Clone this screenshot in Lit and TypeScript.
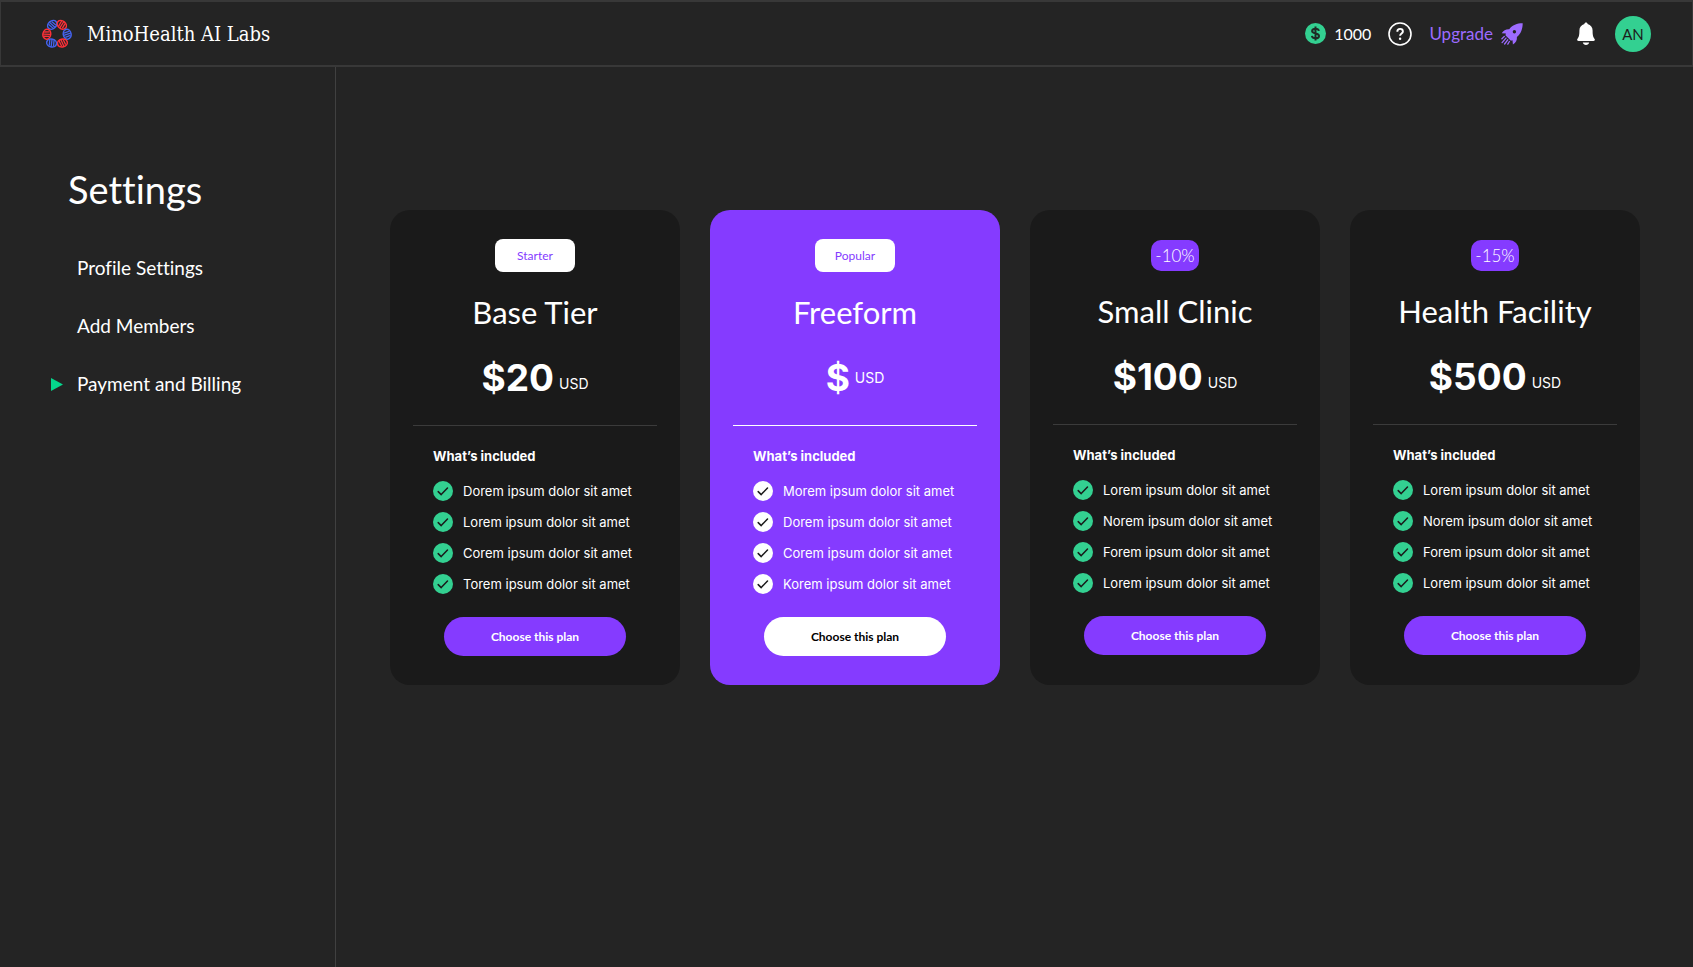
import { LitElement, html, css, svg } from "lit";
import { customElement, property } from "lit/decorators.js";
import { classMap } from "lit/directives/class-map.js";

interface Plan {
  name: string;
  tag: string;
  discount?: boolean;
  featured?: boolean;
  amount: string;
  items: string[];
}

const PLANS: Plan[] = [
  { name: "Base Tier", tag: "Starter", amount: "$20", items: ["Dorem", "Lorem", "Corem", "Torem"] },
  { name: "Freeform", tag: "Popular", featured: true, amount: "$", items: ["Morem", "Dorem", "Corem", "Korem"] },
  { name: "Small Clinic", tag: "-10%", discount: true, amount: "$100", items: ["Lorem", "Norem", "Forem", "Lorem"] },
  { name: "Health Facility", tag: "-15%", discount: true, amount: "$500", items: ["Lorem", "Norem", "Forem", "Lorem"] },
];

const BLUE = "#4463ee";
const RED = "#ff3038";

/* One twisted strand of the logo ring: centre, direction and colour. */
const STRANDS: [number, number, number, string][] = [
  [10.2, 5.8, -40, BLUE],
  [19.8, 5.8, 40, RED],
  [25.2, 15.2, 80, BLUE],
  [20.4, 24, -15, RED],
  [9.600, 24, 15, BLUE],
  [4.800, 15.200, -80, RED],
];

const strand = ([x, y, angle, color]: [number, number, number, string]) => svg`
  <g transform="translate(${x} ${y}) rotate(${angle})" stroke=${color} fill="none">
    <ellipse rx="5" ry="3.900" stroke-width="1.500" />
    <path d="M-2.600 -2.800l1 5.800M-.500 -3.600l1 7.200M1.700 -3l1 5.400" stroke-width="1.300" />
  </g>`;

@customElement("plan-card")
export class PlanCard extends LitElement {
  @property({ attribute: false }) plan!: Plan;

  static styles = css`
    :host { display: block; min-width: 0; }
    .card {
      box-sizing: border-box;
      height: 100%;
      padding: 29px 23px;
      border-radius: 20px;
      background: #1a1a1a;
      color: #fff;
      display: flex;
      flex-direction: column;
      align-items: center;
    }
    .featured { background: #853bff; }
    .tag {
      box-sizing: border-box;
      display: grid;
      place-items: center;
      width: 80px;
      height: 33px;
      border-radius: 8px;
      background: #fff;
      color: #853bff;
      font: 400 12px/16px Lato, sans-serif;
    }
    .discount {
      width: 48px;
      height: 31px;
      margin-top: 1px;
      border-radius: 10px;
      background: #853bff;
      color: #fff;
      font: 300 17px/20px Lato, sans-serif;
    }
    .name { margin: 22px 0 0; font: 400 31px/36px Lato, sans-serif; white-space: nowrap; }
    .price { margin: 24px 0 0; display: flex; align-items: flex-end; gap: 5px; height: 48px; }
    .featured .price { align-items: center; }
    .amount { font: 700 37px/48px Inter, sans-serif; }
    .currency { font: 400 14px/36px Inter, sans-serif; }
    .rule { width: 100%; height: 1px; margin: 23px 0 0; border: 0; background: #3b3b3b; }
    .featured .rule { background: #fff; }
    .included { align-self: stretch; padding: 0 20px; }
    .heading { margin: 20px 0 0; font: 700 13px/20px Inter, sans-serif; }
    .list { list-style: none; margin: 15px 0 0; padding: 0; display: grid; gap: 11px; }
    .item { display: flex; align-items: center; gap: 10px; font: 400 13px/20px Inter, sans-serif; white-space: nowrap; }
    .check { flex: none; width: 20px; height: 20px; color: #33d091; }
    .featured .check { color: #fff; }
    .choose {
      width: 182px;
      height: 39px;
      margin-top: 23px;
      padding: 0;
      border: 0;
      border-radius: 20px;
      background: #853bff;
      color: #fff;
      font: 700 12px/16px Lato, sans-serif;
      cursor: pointer;
    }
    .featured .choose { background: #fff; color: #000; }
  `;

  render() {
    const p = this.plan;
    return html`
      <article class=${classMap({ card: true, featured: !!p.featured })}>
        <span class=${classMap({ tag: true, discount: !!p.discount })}>${p.tag}</span>
        <h2 class="name">${p.name}</h2>
        <p class="price"><span class="amount">${p.amount}</span><span class="currency">USD</span></p>
        <hr class="rule" />
        <section class="included">
          <h3 class="heading">What’s included</h3>
          <ul class="list">
            ${p.items.map(
              (word) => html`<li class="item">
                <svg class="check" viewBox="0 0 20 20" aria-hidden="true">
                  <circle cx="10" cy="10" r="10" fill="currentColor" />
                  <path d="M5.2 10.6l3 3 6.3-6.6" fill="none" stroke="#1a1a1a" stroke-width="1.5" stroke-linecap="round" stroke-linejoin="round" />
                </svg>
                <span>${word} ipsum dolor sit amet</span>
              </li>`
            )}
          </ul>
        </section>
        <button class="choose" type="button">Choose this plan</button>
      </article>
    `;
  }
}

@customElement("app-root")
export class AppRoot extends LitElement {
  static styles = css`
    :host {
      display: flex;
      flex-direction: column;
      min-height: 100vh;
      background: #242424;
      color: #fff;
      font-family: Lato, sans-serif;
      font-variant-ligatures: none;
    }
    a { color: inherit; text-decoration: none; }
    .topbar {
      box-sizing: border-box;
      height: 67px;
      padding: 0 41px;
      border: 2px solid #383838;
      border-width: 2px 1px;
      display: flex;
      align-items: center;
      justify-content: space-between;
    }
    .brand { display: flex; align-items: center; gap: 15px; font: 400 20px/24px "DejaVu Serif Condensed", "DejaVu Serif", serif; }
    .logo { width: 30px; height: 30px; }
    .tools { display: flex; align-items: center; font-size: 17px; line-height: 24px; }
    .credits { display: flex; align-items: center; gap: 8px; font-size: 16px; }
    .coin { width: 21px; height: 21px; }
    .icon-button { display: flex; padding: 0; border: 0; background: none; color: #fff; cursor: pointer; }
    .help { margin: 0 17px; }
    .help svg { width: 24px; height: 24px; }
    .upgrade { display: flex; align-items: center; gap: 8px; color: #9d6bff; }
    .rocket { width: 22px; height: 22px; }
    .bell { margin: 0 20px 0 54px; }
    .bell svg { width: 18px; height: 24px; }
    .avatar {
      width: 36px;
      height: 36px;
      padding: 0;
      border: 0;
      border-radius: 50%;
      background: #33d091;
      color: #1c1c1c;
      font: 400 15px/20px Lato, sans-serif;
      cursor: pointer;
    }
    .body { flex: 1; display: grid; grid-template-columns: 336px minmax(0, 1fr); }
    .sidebar { box-sizing: border-box; padding: 100px 20px 0 51px; border-right: 1px solid #404040; }
    .title { margin: 0 0 0 17px; font: 400 38px/44px Lato, sans-serif; font-variant-ligatures: none; }
    .menu { list-style: none; margin: 45px 0 0; padding: 0; display: grid; gap: 34px; font-size: 19px; line-height: 24px; }
    .entry { display: flex; align-items: center; gap: 14px; }
    .marker { width: 12px; height: 13px; fill: #05d68c; }
    .plans {
      display: grid;
      grid-template-columns: repeat(4, minmax(0, 1fr));
      gap: 30px;
      align-content: start;
      padding: 143px 53px 60px 54px;
    }
  `;

  render() {
    const entries = ["Profile Settings", "Add Members", "Payment and Billing"];
    return html`
      <header class="topbar">
        <a class="brand" href="#">
          <svg class="logo" viewBox="0 0 30 30" aria-hidden="true">${STRANDS.map(strand)}</svg>
          <span>MinoHealth AI Labs</span>
        </a>
        <div class="tools">
          <span class="credits">
            <svg class="coin" viewBox="0 0 21 21" aria-hidden="true">
              <circle cx="10.5" cy="10.5" r="10.5" fill="#33d091" />
              <path d="M13.9 7.9c-.3-1.5-1.6-2.2-3.4-2.2-2 0-3.4.9-3.4 2.4 0 3.3 6.9 1.5 6.9 4.8 0 1.5-1.5 2.4-3.5 2.4S7.2 14.5 6.9 12.9M10.5 3.5v14" fill="none" stroke="#1f2b26" stroke-width="2" />
            </svg>
            <span>1000</span>
          </span>
          <button class="icon-button help" type="button" aria-label="Help">
            <svg viewBox="0 0 24 24" fill="none" stroke="currentColor">
              <circle cx="12" cy="12" r="11" stroke-width="1.6" />
              <path d="M9.3 9.7c0-1.8 1.2-2.8 2.8-2.8s2.8 1 2.8 2.5c0 2-2.8 2.1-2.8 4.4" stroke-width="1.9" />
              <circle cx="12.1" cy="16.7" r="1.2" fill="currentColor" stroke="none" />
            </svg>
          </button>
          <a class="upgrade" href="#">
            <span>Upgrade</span>
            <svg class="rocket" viewBox="0 0 22 22" aria-hidden="true">
              <path fill="currentColor" fill-rule="evenodd" d="M21.7.3C16.5.2 11.3 2 8.2 6.2 5.2 6 2.500 7 .7 10.300l4.200.300-.5 1.600 5.500 5.500 1.600-.5.400 4.400c3.100-1.700 4.300-4.600 4-7.600 4.100-3.100 5.800-8.500 5.800-13.700zM13.400 7a1.700 1.700 0 1 1 0 3.400 1.700 1.700 0 0 1 0-3.400z" />
              <path d="M3.3 13.4L.9 15.800M5 15.100l-3.900 4.500M6.700 16.800l-3.100 4.200M8.400 18.500l-1.600 2.600" fill="none" stroke="currentColor" stroke-width="1.300" stroke-linecap="round" />
            </svg>
          </a>
          <button class="icon-button bell" type="button" aria-label="Notifications">
            <svg viewBox="0 0 18 24" fill="currentColor">
              <path d="M9 .5c.9 0 1.500.6 1.600 1.400 3.200.8 5 3.400 5 6.700 0 4.900.6 6.700 2 8.300.7 1.100.1 2.100-1.100 2.100h-15c-1.200 0-1.800-1-1.100-2.100 1.400-1.600 2-3.400 2-8.300 0-3.300 1.800-5.900 5-6.700C7.500 1.100 8.100.5 9 .5zM5.800 20.500h6.400c-.3 1.600-1.600 2.500-3.200 2.500s-2.900-.9-3.200-2.500z" />
            </svg>
          </button>
          <button class="avatar" type="button">AN</button>
        </div>
      </header>
      <div class="body">
        <nav class="sidebar" aria-label="Settings">
          <h1 class="title">Settings</h1>
          <ul class="menu">
            ${entries.map(
              (label, i) => html`<li>
                <a class="entry" href="#">
                  <svg class="marker" viewBox="0 0 12 13" aria-hidden="true">
                    ${i === 2 ? svg`<path d="M0 0l12 6.5L0 13z" />` : null}
                  </svg>
                  <span>${label}</span>
                </a>
              </li>`
            )}
          </ul>
        </nav>
        <main class="plans">${PLANS.map((plan) => html`<plan-card .plan=${plan}></plan-card>`)}</main>
      </div>
    `;
  }
}
